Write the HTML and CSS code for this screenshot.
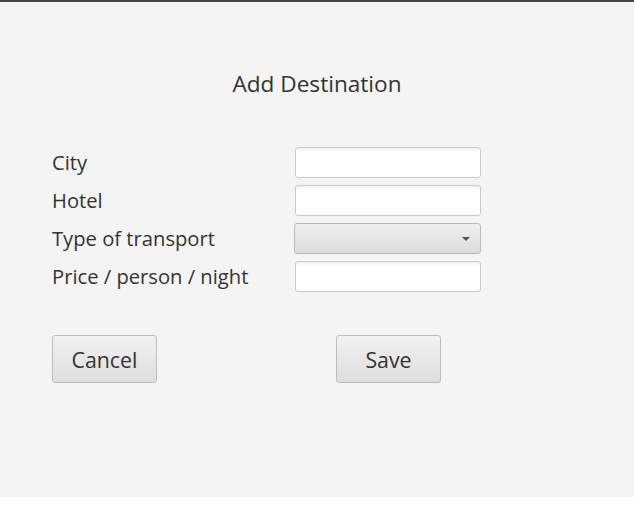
FILE: index.html
```html
<!DOCTYPE html>
<html>
<head>
<meta charset="utf-8">
<link rel="stylesheet" href="styles.css">
</head>
<body>
<div class="window">
  <h1 class="title">Add Destination</h1>
  <div class="form">
    <label class="label">City</label>
    <div class="field"></div>
    <label class="label">Hotel</label>
    <div class="field"></div>
    <label class="label">Type of transport</label>
    <div class="combo"><span class="arrow"></span></div>
    <label class="label">Price / person / night</label>
    <div class="field"></div>
  </div>
  <div class="actions">
    <button class="btn">Cancel</button>
    <button class="btn">Save</button>
  </div>
</div>
</body>
</html>
```
FILE: styles.css
```css
html, body {
  margin: 0;
  padding: 0;
  background: #ffffff;
}
.window {
  height: 495px;
  background: #f4f4f4;
  border-top: 2px solid #454545;
  font-family: "Open Sans", "Noto Sans", sans-serif;
  color: #333333;
  display: flex;
  flex-direction: column;
}
.title {
  margin: 66px 0 0 0;
  height: 32px;
  line-height: 32px;
  font-size: 22.6px;
  font-weight: normal;
  text-align: center;
  color: #333333;
}
.form {
  margin: 47px 0 0 52px;
  display: grid;
  grid-template-columns: 242px 187px;
  grid-auto-rows: 31px;
  row-gap: 7px;
  align-items: center;
}
.label {
  font-size: 20.2px;
  line-height: 31px;
  color: #333333;
  white-space: nowrap;
}
.field {
  margin-left: 1px;
  width: 184px;
  height: 29px;
  border: 1px solid #c9c9c9;
  border-radius: 3px;
  background: linear-gradient(#f0f0f0 0, #ffffff 4px);
}
.combo {
  position: relative;
  width: 185px;
  height: 29px;
  border: 1px solid #b9b9b9;
  border-radius: 3px;
  background: linear-gradient(#efefef, #dcdcdc);
}
.arrow {
  position: absolute;
  right: 10px;
  top: 13px;
  width: 0;
  height: 0;
  border-left: 4px solid transparent;
  border-right: 4px solid transparent;
  border-top: 4px solid #555555;
}
.actions {
  margin: 43px 0 0 52px;
  display: flex;
  gap: 179px;
}
.btn {
  width: 105px;
  height: 48px;
  border: 1px solid #bcbcbc;
  border-radius: 3px;
  background: linear-gradient(#f1f1f1, #dedede);
  font-family: "Open Sans", "Noto Sans", sans-serif;
  font-size: 21.3px;
  color: #333333;
  padding: 0;
}
```
